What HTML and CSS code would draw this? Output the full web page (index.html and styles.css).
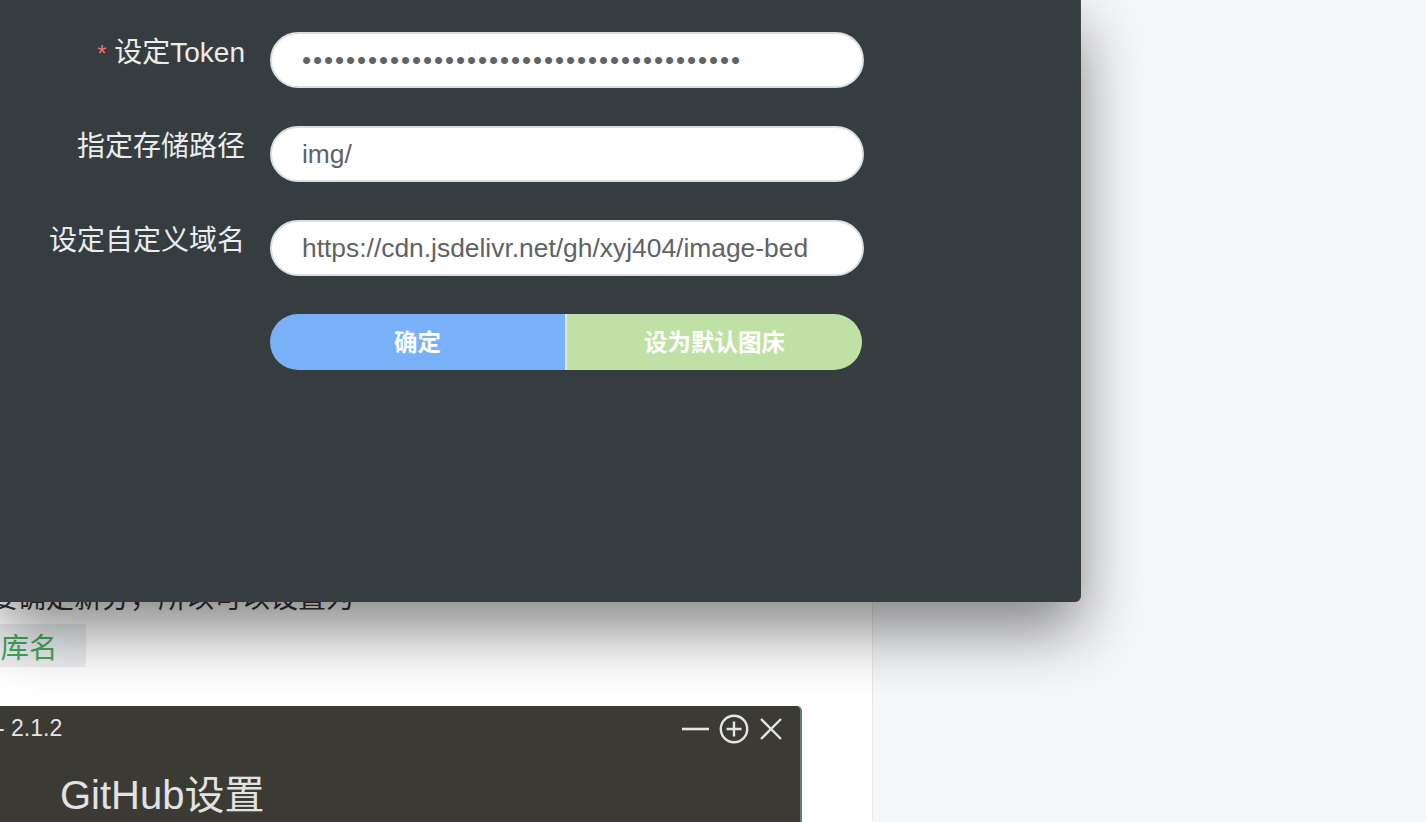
FILE: index.html
```html
<!DOCTYPE html>
<html lang="zh-CN">
<head>
<meta charset="utf-8">
<title>GitHub图床设置</title>
<link rel="stylesheet" href="styles.css">
</head>
<body>
<div class="layout">
  <main class="column">
    <article class="article">
      <p class="line line-first">需要确定新分，所以可以设置为</p>
      <p class="line line-code"><code class="code">仓库名</code></p>
      <div class="window">
        <div class="window-bar">
          <span class="window-title">PicGo - 2.1.2</span>
          <span class="window-actions">
            <svg class="icon" width="30" height="30" viewBox="0 0 30 30"><path d="M2 15H29" stroke="#e4e4e4" stroke-width="2.6" fill="none"/></svg>
            <svg class="icon" width="32" height="32" viewBox="0 0 32 32"><circle cx="16" cy="16" r="13.2" stroke="#e4e4e4" stroke-width="2.4" fill="none"/><path d="M16 8.5V23.5M8.5 16H23.5" stroke="#e4e4e4" stroke-width="2.4" fill="none"/></svg>
            <svg class="icon" width="26" height="26" viewBox="0 0 26 26"><path d="M3 3L23 23M23 3L3 23" stroke="#e4e4e4" stroke-width="2.4" fill="none"/></svg>
          </span>
        </div>
        <h2 class="window-heading">GitHub设置</h2>
      </div>
    </article>
  </main>
  <aside class="side"></aside>
</div>

<section class="dialog">
  <form class="form">
    <label class="label"><span class="req">*</span> 设定Token</label>
    <div class="input"><span class="dots">••••••••••••••••••••••••••••••••••••••••</span></div>

    <label class="label">指定存储路径</label>
    <div class="input">img/</div>

    <label class="label">设定自定义域名</label>
    <div class="input">https://cdn.jsdelivr.net/gh/xyj404/image-bed</div>

    <span class="label"></span>
    <div class="btn-group">
      <button type="button" class="btn btn-primary">确定</button>
      <button type="button" class="btn btn-success">设为默认图床</button>
    </div>
  </form>
</section>
</body>
</html>
```

FILE: styles.css
```css
html, body {
  margin: 0;
  padding: 0;
}
body {
  width: 1426px;
  height: 822px;
  overflow: hidden;
  position: relative;
  background: #f6f7f9;
  font-family: "Liberation Sans", "Noto Sans CJK SC", sans-serif;
}
.layout {
  display: flex;
  height: 822px;
}
.column {
  width: 872px;
  height: 822px;
  background: #ffffff;
  border-right: 1px solid #e6e7eb;
  overflow: hidden;
  flex: none;
}
.side {
  flex: 1;
}
.article {
  margin-left: -30px;
  padding-top: 572px;
}
.line {
  margin: 0;
  font-family: "Noto Sans CJK SC", sans-serif;
  font-size: 28px;
  line-height: 48px;
  color: #333333;
  white-space: nowrap;
}
.line-first {
  margin-left: -8px;
}
.line-code {
  padding-top: 4px;
  line-height: 44px;
}
.code {
  display: inline-block;
  font-family: "Noto Sans CJK SC", sans-serif;
  font-size: 28.5px;
  line-height: 43px;
  height: 43px;
  padding: 0 28px 0 2px;
  background: #eceef1;
  color: #42a85a;
  vertical-align: top;
}
.window {
  margin-top: 38px;
  width: 832px;
  height: 140px;
  background: #3b3a35;
  border-top-right-radius: 5px;
  border-right: 2px solid #5d7f7e;
  box-sizing: border-box;
  color: #e4e4e4;
}
.window-bar {
  display: flex;
  align-items: center;
  justify-content: space-between;
  height: 44px;
  padding: 0 16px 0 0;
}
.window-title {
  font-family: "Liberation Sans", sans-serif;
  font-size: 23px;
  margin-left: -42px;
}
.window-actions {
  display: flex;
  align-items: center;
  gap: 8px;
  padding-top: 2px;
}
.icon {
  display: block;
}
.window-heading {
  margin: 19px 0 0 90px;
  font-family: "Liberation Sans", "Noto Sans CJK SC", sans-serif;
  font-weight: normal;
  font-size: 40px;
  line-height: 52px;
  color: #e2e2e2;
}

.dialog {
  position: absolute;
  left: 0;
  top: 0;
  width: 1080px;
  height: 602px;
  background: #363d40;
  border-bottom-right-radius: 6px;
  box-shadow: 0 28px 64px rgba(0, 0, 0, 0.48), 1px 0 0 #495053;
}
.form {
  display: grid;
  grid-template-columns: 245px 594px;
  grid-auto-rows: 56px;
  column-gap: 25px;
  row-gap: 38px;
  padding-top: 32px;
}
.label {
  text-align: right;
  font-family: "Liberation Sans", "Noto Sans CJK SC", sans-serif;
  font-size: 28px;
  line-height: 42px;
  color: #ececec;
  white-space: nowrap;
}
.req {
  color: #f56c6c;
  font-size: 24px;
}
.input {
  box-sizing: border-box;
  height: 56px;
  border: 2px solid #d9dde4;
  border-radius: 28px;
  background: #ffffff;
  padding: 0 30px;
  font-family: "Liberation Sans", sans-serif;
  font-size: 26.4px;
  line-height: 52px;
  color: #606266;
  white-space: nowrap;
  overflow: hidden;
}
.dots {
  font-size: 26px;
  letter-spacing: 1.9px;
  color: #606266;
}
.btn-group {
  display: flex;
  width: 592px;
  height: 56px;
  border-radius: 28px;
  overflow: hidden;
}
.btn {
  flex: 1;
  border: 0;
  margin: 0;
  padding: 0 0 3px;
  height: 56px;
  font-family: "Noto Sans CJK SC", sans-serif;
  font-size: 23.5px;
  font-weight: bold;
  color: #ffffff;
  cursor: pointer;
}
.btn-primary {
  background: #79b1f8;
}
.btn-success {
  background: #bfe1a5;
  border-left: 2px solid #d9eccc;
}
```
